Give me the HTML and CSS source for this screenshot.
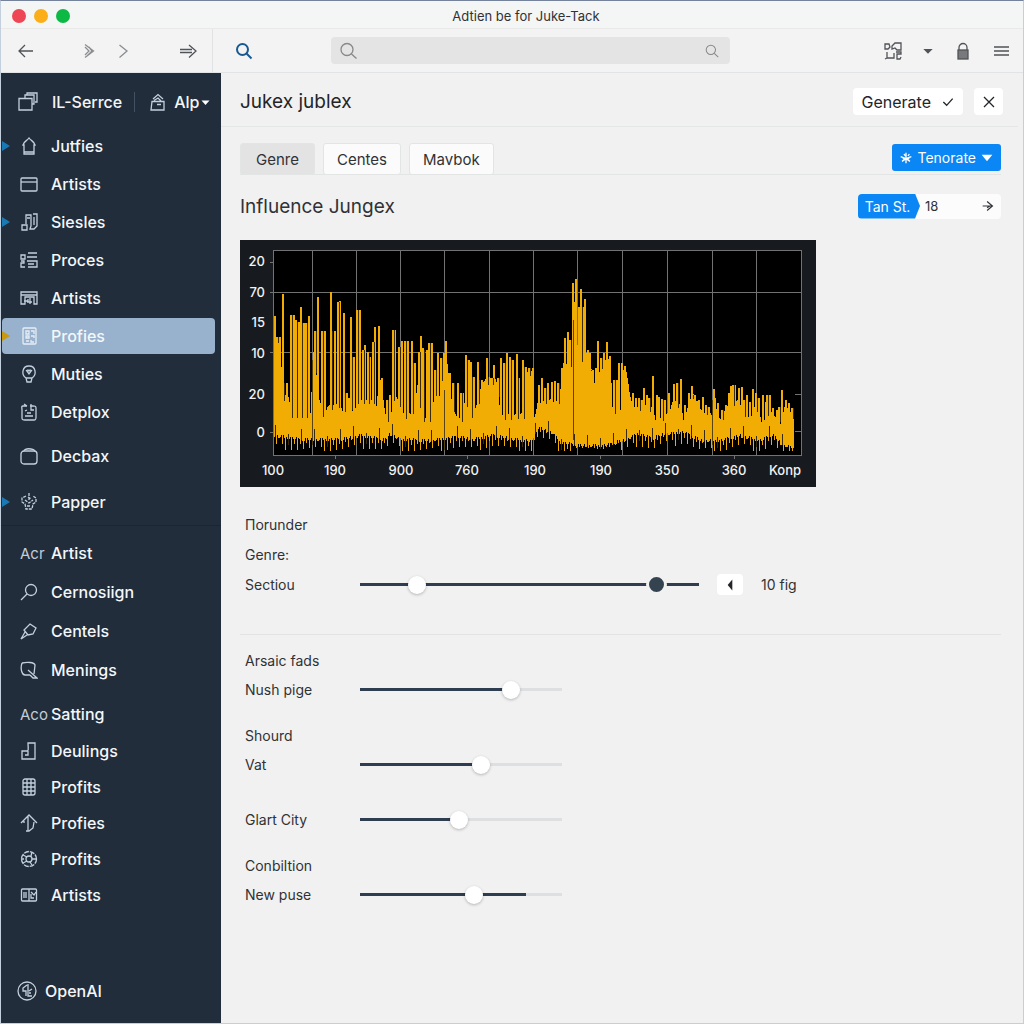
FILE: index.html
```html
<!DOCTYPE html>
<html lang="en">
<head>
<meta charset="utf-8">
<meta name="viewport" content="width=device-width, initial-scale=1">
<title>Adtien be for Juke-Tack</title>
<link rel="stylesheet" href="styles.css">
</head>
<body>
<div class="window">
  <header class="titlebar">
    <div class="lights"><span class="light red"></span><span class="light amber"></span><span class="light green"></span></div>
    <div class="window-title">Adtien be for Juke-Tack</div>
  </header>

  <div class="toolbar">
    <div class="history">
      <button class="icon-btn back" aria-label="Back"><svg class="icon" viewBox="0 0 18 18"><path d="M16 9H2.500M8 3 2 9l6 6"/></svg></button>
      <button class="icon-btn skip" aria-label="Skip"><svg class="icon" viewBox="0 0 18 18"><path d="M5 2.500 13.500 9 5 15.500M5 5l4 4-4 4M9 5l3 4-5 5"/></svg></button>
      <button class="icon-btn next" aria-label="Next"><svg class="icon" viewBox="0 0 18 18"><path d="M5.500 3 13 9l-7.500 6.500"/></svg></button>
      <button class="icon-btn jump" aria-label="Forward"><svg class="icon" viewBox="0 0 18 18"><path d="M1 7.500h12M1 10.500h12M10 3l7 6-7 6.500"/></svg></button>
    </div>
    <button class="icon-btn find" aria-label="Find"><svg class="icon" viewBox="0 0 18 18"><circle cx="7.500" cy="7.500" r="5.500"/><path d="m11.500 11.500 5 5"/></svg></button>
    <label class="search">
      <svg class="icon" viewBox="0 0 18 18"><circle cx="8" cy="7.500" r="6"/><path d="m12.500 12 5 4.500"/></svg>
      <input type="search" aria-label="Search">
      <svg class="icon small" viewBox="0 0 18 18"><circle cx="7.500" cy="7.500" r="6"/><path d="m12 12 5 5"/></svg>
    </label>
    <div class="tools">
      <button class="icon-btn" aria-label="Layout"><svg class="icon" viewBox="0 0 18 18"><path d="M1 2h4l1 3-2 2H1zM8 4l3-3h6v7h-4l-2-2-3 1zM3 10v6h7v-5M3 16l-2 1M12 10h5v2h-4v5h3l1-2"/></svg></button>
      <button class="icon-btn caret" aria-label="More"><svg class="icon solid" viewBox="0 0 18 18"><path d="M2 6h14l-7 7z"/></svg></button>
      <button class="icon-btn" aria-label="Lock"><svg class="icon lock" viewBox="0 0 18 18"><path d="M5 9V5.500a4 4 0 0 1 8 0V9"/><rect x="4" y="8" width="10" height="9"/></svg></button>
      <button class="icon-btn" aria-label="Menu"><svg class="icon" viewBox="0 0 18 18"><path d="M2 5h15M2 9h15M2 13h15"/></svg></button>
    </div>
  </div>

  <div class="body">
    <aside class="sidebar">
      <div class="switcher">
        <a class="switch" href="#"><svg class="icon large" viewBox="0 0 20 20"><path d="M1 6.500h13V18H1zM7 6V3h9v9h-2M9 3V1h10v9h-2"/></svg>IL-Serrce</a>
        <button class="switch account"><svg class="icon" viewBox="0 0 18 18"><path d="M3 8.500h12V17H2zM4 6l5-4.500 5 4.500M5 7.500 9 5l3 3M8 11.500h4"/></svg>Alp<svg class="icon tiny solid" viewBox="0 0 18 18"><path d="M1 5h16l-8 9z"/></svg></button>
      </div>
      <nav>
        <ul class="list">
          <li class="marked"><a href="#"><svg class="icon" viewBox="0 0 18 18"><path d="M3 8c1-4 4-4 6-7 2 3 5 3 6 7h-1v9H4V8zM4 15h10"/></svg>Jutfies</a></li>
          <li><a href="#"><svg class="icon" viewBox="0 0 18 18"><rect x="1" y="3" width="16" height="13" rx="1"/><path d="M1 7h16"/></svg>Artists</a></li>
          <li class="marked"><a href="#"><svg class="icon" viewBox="0 0 18 18"><path d="M6 11V2h5v11l-1 3h4l3-3V1h-4M2 12h5v5H2zM7 5h3M14 4v8"/></svg>Siesles</a></li>
          <li><a href="#"><svg class="icon" viewBox="0 0 18 18"><path d="M8 2h9M7 6h10M7 10h10v6H8M8 13h6M1 4h4v4H1zM1 10h3v2H1v4h4"/></svg>Proces</a></li>
          <li><a href="#"><svg class="icon" viewBox="0 0 18 18"><path d="M1 3h16v12h-3V8H5v7H1zM1 6h16M4 12h4v-2M10 15V9M7 13h5"/></svg>Artists</a></li>
          <li class="active"><a href="#" aria-current="page"><svg class="icon" viewBox="0 0 18 18"><rect x="3" y="1" width="13" height="16" rx="1"/><path d="M6 4h3v3H6zM11 4h3v3M6 9h3v2H6zM11 9h3v2M6 14h3M11 13v2h3"/></svg>Profies</a></li>
          <li><a href="#"><svg class="icon" viewBox="0 0 18 18"><path d="M6 13C1 10 2 1 9 1s8 9 3 12l-1 4H7zM6 13h6"/><path d="M6.500 5.500 8 5l1 1 1-1 1.500.5L9 9z"/></svg>Muties</a></li>
          <li><a href="#"><svg class="icon" viewBox="0 0 18 18"><path d="M7 3H3C1 3 2 5 2 7v8c0 2 1 2 3 2h9c2 0 2-1 2-3V5c0-2-1-2-3-2h-3M4 1l3 2M11 1v6h3M5 8l2-1M7 10h4M5 13h8"/></svg>Detplox</a></li>
        </ul>
        <ul class="list roomy">
          <li><a href="#"><svg class="icon" viewBox="0 0 18 18"><rect x="1" y="4" width="16" height="13" rx="3"/><path d="M4 4c0-3 9-3 11 0"/></svg>Decbax</a></li>
          <li class="marked"><a href="#"><svg class="icon" viewBox="0 0 18 18"><path d="M6 3 2 5v4l3 2 1 5h6l1-5 3-2V5l-3-2M9 0v8M5 7l4 3 4-3M8 4l3 2M7 13h4" stroke-dasharray="3 1"/></svg>Papper</a></li>
        </ul>
        <h2 class="group first"><span>Acr</span>Artist</h2>
        <ul class="list medium">
          <li><a href="#"><svg class="icon" viewBox="0 0 18 18"><circle cx="11" cy="7" r="5.500"/><path d="m7 11-6 6"/></svg>Cernosiign</a></li>
          <li><a href="#"><svg class="icon" viewBox="0 0 18 18"><path d="m10 2 6 4-3 6-5 1-4-5zM5 10l-4 7 6-4"/></svg>Centels</a></li>
          <li><a href="#"><svg class="icon" viewBox="0 0 18 18"><path d="M2 2c5-1 12-1 13 2l-1 9M2 2C0 8 2 14 5 14h5M8 9l9 8h-4l-3-3"/></svg>Menings</a></li>
        </ul>
        <h2 class="group"><span>Aco</span>Satting</h2>
        <ul class="list dense">
          <li><a href="#"><svg class="icon" viewBox="0 0 18 18"><path d="M8 1h7v16H2V9h5c2 0 1-4 1-8zM8 9v4H5"/></svg>Deulings</a></li>
          <li><a href="#"><svg class="icon" viewBox="0 0 18 18"><rect x="3" y="1" width="12" height="16" rx="2"/><path d="M3 5h12M3 9h12M3 13h12M7 1v16M11 1v16"/></svg>Profits</a></li>
          <li><a href="#"><svg class="icon" viewBox="0 0 18 18"><path d="m1 9 8-8 8 8M8 2v15M6 17h3l4-3 1-6M4 7v2"/></svg>Profies</a></li>
          <li><a href="#"><svg class="icon" viewBox="0 0 18 18"><circle cx="9" cy="9" r="7.500" stroke-dasharray="5 1"/><circle cx="9" cy="9" r="3"/><path d="m3 5 4 2M12 2l-1 4M16 9h-4M12 15l-2-3M3 13l4-2M1 9h3"/></svg>Profits</a></li>
          <li><a href="#"><svg class="icon" viewBox="0 0 18 18"><rect x="1.500" y="3" width="15" height="12" rx="1"/><path d="M9 3v12M4 6v6M6 6v6M11 6l3 3 2-3M11 8v4h3"/></svg>Artists</a></li>
        </ul>
      </nav>
      <a class="brand" href="#"><svg class="icon large" viewBox="0 0 20 20"><circle cx="10" cy="10" r="9"/><path d="M10 4 6 7v3h3v5M11 3v12h4M12 10l3-2M12 12h2"/></svg>OpenAI</a>
    </aside>

    <main class="main">
      <div class="page-head">
        <h1>Jukex jublex</h1>
        <button class="plain generate">Generate<svg class="icon tiny" viewBox="0 0 18 18"><path d="m2 9 5 5L16 4"/></svg></button>
        <button class="plain close" aria-label="Close"><svg class="icon" viewBox="0 0 18 18"><path d="m4 4 10 10M14 4 4 14"/></svg></button>
      </div>

      <div class="tabs">
        <button class="tab selected">Genre</button>
        <button class="tab">Centes</button>
        <button class="tab">Mavbok</button>
        <button class="primary"><svg class="icon tiny" viewBox="0 0 18 18"><path d="M9 1v16M1 7l8 3 8-3M3 14l6-4 6 4M6 3l2 3M14 3l-2 3M4 10h10"/></svg>Tenorate<svg class="icon tiny solid" viewBox="0 0 18 18"><path d="M1 4h16L9 14z"/></svg></button>
      </div>

      <div class="section-head">
        <h2>Influence Jungex</h2>
        <div class="stepper">
          <button class="tag">Tan St.</button>
          <input type="text" value="18" aria-label="Tan St.">
          <button class="go" aria-label="Go"><svg class="icon" viewBox="0 0 18 18"><path d="M3 9h11M8 4l6 5-6 5M11 9l-3 2"/></svg></button>
        </div>
      </div>

      <svg class="chart" viewBox="0 0 576 247" role="img" aria-label="Influence Jungex waveform">
        <rect class="chart-frame" width="576" height="247"/>
        <rect class="chart-plot" x="34" y="10" width="528" height="205"/>
        <path class="grid" d="M72.500 10v205M116.500 10v205M160.500 10v205M204.500 10v205M249.500 10v205M293.500 10v205M337.500 10v205M382.500 10v205M427.500 10v205M472.500 10v205M516.500 10v205M30 52.500h532M30 112.500h532M30 22.500h4M30 192.500h4M555 154.500h7M555 191.500h7M95.500 215v4M227.500 215v4M360.500 215v4M494.500 215v4"/>
        <path class="wave" id="wave"/>
        <path class="gaps" id="gaps"/>
        <path class="grid over" d="M72.500 120v85M204.500 150v60M333.500 80v120M472.500 160v45"/>
        <rect class="grid" x="33.500" y="10.500" width="528" height="205"/>
        <g class="y-axis">
          <text x="25" y="26">20</text><text x="25" y="57">70</text><text x="25" y="87">15</text><text x="25" y="118">10</text><text x="25" y="159">20</text><text x="25" y="197">0</text>
        </g>
        <g class="x-axis">
          <text x="33" y="235">100</text><text x="95" y="235">190</text><text x="161" y="235">900</text><text x="227" y="235">760</text><text x="295" y="235">190</text><text x="361" y="235">190</text><text x="427" y="235">350</text><text x="494" y="235">360</text><text x="545" y="235">Konp</text>
        </g>
      </svg>

      <form class="settings">
        <section class="block top">
          <h3>Пorunder</h3>
          <h3>Genre:</h3>
          <div class="row">
            <label for="section">Sectiou</label>
            <div class="range-pair">
              <input id="section" class="slider full" type="range" value="15">
              <input class="slider upper" type="range" value="90" aria-label="Sectiou upper">
            </div>
            <button type="button" class="plain nudge" aria-label="Previous"><svg class="icon solid" viewBox="0 0 18 18"><path d="M12 2v14L6 9z"/></svg></button>
            <output for="section">10 fig</output>
          </div>
        </section>
        <section class="block">
          <h3>Arsaic fads</h3>
          <div class="row"><label for="nush">Nush pige</label><input id="nush" class="slider" type="range" value="77" style="--fill:75%"></div>
        </section>
        <section class="block apart">
          <h3>Shourd</h3>
          <div class="row"><label for="vat">Vat</label><input id="vat" class="slider" type="range" value="61" style="--fill:60%"></div>
        </section>
        <section class="block">
          <div class="row"><label for="city">Glart City</label><input id="city" class="slider" type="range" value="49" style="--fill:49%"></div>
        </section>
        <section class="block">
          <h3>Conbiltion</h3>
          <div class="row"><label for="puse">New puse</label><input id="puse" class="slider" type="range" value="57" style="--fill:82%"></div>
        </section>
      </form>
    </main>
  </div>
</div>
<script src="wave.js"></script>
</body>
</html>
```
FILE: styles.css
```css
* { box-sizing: border-box; }

body {
  margin: 0;
  font-family: Inter, "Liberation Sans", sans-serif;
  font-size: 14px;
  color: #303236;
  background: #f1f1f1;
}

h1, h2, h3, ul { margin: 0; padding: 0; }
h1, h2, h3 { font-weight: 400; }
ul { list-style: none; }
a { color: inherit; text-decoration: none; }
button, input { font: inherit; color: inherit; border: 0; margin: 0; padding: 0; background: none; }

.window {
  display: flex;
  flex-direction: column;
  min-height: 100vh;
  border: 1px solid #c3cfdd;
  border-top-color: #74839b;
}

.icon {
  width: 18px;
  height: 18px;
  flex: none;
  display: block;
  fill: none;
  stroke: currentColor;
  stroke-width: 1.3;
}
.icon.large { width: 20px; height: 20px; }
.icon.small { width: 14px; height: 14px; }
.icon.tiny { width: 12px; height: 12px; stroke-width: 2; }
.icon.solid { fill: currentColor; stroke: none; }

/* Title bar */
.titlebar {
  display: grid;
  grid-template-columns: 84px 1fr 56px;
  align-items: center;
  height: 28px;
  padding-top: 2px;
  border-bottom: 1px solid #e9e9ea;
  background: #f4f5f5;
}
.lights { display: flex; gap: 8px; padding-left: 11px; }
.light { width: 14px; height: 14px; border-radius: 50%; }
.red { background: #ee4655; }
.amber { background: #fbae17; }
.green { background: #0cb944; }
.window-title { text-align: center; font-size: 13px; }

/* Toolbar */
.toolbar {
  display: flex;
  align-items: center;
  height: 44px;
  border-bottom: 1px solid #e2e3e4;
  background: #f3f3f3;
}
.history {
  display: flex;
  align-items: center;
  align-self: stretch;
  width: 212px;
  padding-left: 16px;
  border-right: 1px solid #e2e3e4;
}
.icon-btn { color: #505357; }
.back { margin-right: 45px; }
.skip { margin-right: 16px; color: #8b8d90; }
.next { margin-right: 47px; color: #8b8d90; }
.find { margin-left: 22px; color: #175a93; }
.find .icon { stroke-width: 2; }
.search {
  display: flex;
  align-items: center;
  flex: 1;
  height: 27px;
  margin: 0 154px 0 78px;
  padding: 0 11px 0 8px;
  border-radius: 4px;
  background: #e4e4e4;
  color: #86888a;
}
.search input { flex: 1; min-width: 0; outline: 0; appearance: none; }
.tools { display: flex; align-items: center; gap: 20px; padding-right: 13px; }
.caret .icon { width: 12px; height: 12px; }
.lock rect { fill: #77797c; }

/* Sidebar */
.body { display: flex; flex: 1; }
.sidebar {
  display: flex;
  flex-direction: column;
  flex: none;
  width: 220px;
  padding-bottom: 20px;
  background: #212d3a;
  color: #f4f7fa;
  font-size: 16px;
  font-weight: 500;
}
.switcher { display: flex; align-items: center; height: 54px; padding: 4px 0 0 17px; }
.switch { display: flex; align-items: center; gap: 14px; height: 20px; }
.switch .icon, .list .icon, .brand .icon { color: #c3d0dd; }
.account { gap: 7px; margin-left: 12px; padding-left: 14px; border-left: 1px solid #435160; font-weight: 500; }
.account .tiny { width: 9px; height: 9px; margin-left: -5px; color: #fff; }

.list li { position: relative; padding: 1px 6px 1px 1px; }
.list a { display: flex; align-items: center; gap: 13px; height: 36px; padding-left: 18px; border-radius: 4px; }
.roomy { padding-top: 2px; border-bottom: 1px solid #1b2632; }
.roomy a { height: 44px; }
.medium a { height: 37px; }
.dense a { height: 34px; }
.active a { background: #98b1cc; }
.active .icon { color: #e6eef6; }
.marked::before, .active::before {
  content: "";
  position: absolute;
  left: 1px;
  top: 50%;
  margin-top: -5px;
  border: 5px solid transparent;
  border-left: 8px solid #1979b4;
  border-right: 0;
}
.active::before { border-left-color: #c79a10; }
.group { display: flex; align-items: center; height: 38px; margin-top: 6px; padding-left: 19px; font-size: 16px; font-weight: 500; }
.group.first { margin-top: 8px; }
.group span { width: 31px; font-weight: 400; color: #c3ccd6; font-size: 15px; }
.brand { display: flex; align-items: center; gap: 8px; height: 24px; margin-top: auto; padding-left: 16px; }

/* Main column */
.main { flex: 1; min-width: 0; padding: 0 22px 24px 19px; }
.page-head {
  display: flex;
  align-items: center;
  height: 54px;
  margin: 0 -17px 0 -19px;
  padding: 4px 15px 0 19px;
  border-bottom: 1px solid #e5e6e6;
}
h1 { flex: 1; font-size: 19px; color: #232529; }
.plain { display: flex; align-items: center; justify-content: center; height: 27px; border-radius: 4px; background: #fff; color: #232529; }
.generate { gap: 11px; padding: 0 9px; font-size: 16px; }
.close { width: 29px; margin-left: 11px; }

.tabs { display: flex; align-items: flex-end; gap: 8px; height: 48px; border-bottom: 1px solid #e3e4e4; }
.tab {
  height: 32px;
  margin-bottom: -1px;
  padding: 0 13px;
  border: 1px solid #e3e4e4;
  border-radius: 3px;
  background: #fbfbfb;
  font-size: 15px;
}
.tab.selected { padding: 0 15px; background: #e3e3e3; }
.primary {
  display: flex;
  align-items: center;
  gap: 5px;
  height: 27px;
  margin: 0 0 3px auto;
  padding: 0 8px;
  border-radius: 3px;
  background: #0a86f5;
  color: #fff;
}

.section-head { display: flex; align-items: center; justify-content: space-between; height: 65px; padding-bottom: 3px; }
.section-head h2 { font-size: 19px; }
.stepper { display: flex; width: 143px; height: 25px; border-radius: 4px; background: #fcfcfc; }
.tag {
  width: 62px;
  padding-right: 3px;
  border-radius: 4px 0 0 4px;
  background: #0a86f5;
  color: #fff;
  clip-path: polygon(0 0, 92% 0, 100% 50%, 92% 100%, 0 100%);
}
.stepper input { flex: 1; min-width: 0; padding-left: 5px; font-size: 13px; }
.go { padding: 0 5px; }
.go .icon { width: 16px; height: 16px; }

/* Chart */
.chart { display: block; width: 100%; max-width: 576px; height: auto; }
.chart-frame { fill: #171b20; }
.chart-plot { fill: #000; }
.grid { fill: none; stroke: #727272; }
.over { stroke: #59430c; }
.wave { fill: #f2ad05; }
.gaps { fill: #3a2a06; }
.chart text { fill: #f2f2f2; font-size: 13px; font-weight: 500; }
.y-axis { text-anchor: end; }
.x-axis { text-anchor: middle; }

/* Settings */
.settings { display: flex; flex-direction: column; }
.block { display: flex; flex-direction: column; gap: 8px; padding: 0 0 25px 5px; }
.block.apart { padding-bottom: 34px; }
.block.top { padding: 27px 0 39px 5px; border-bottom: 1px solid #e2e3e3; margin-bottom: 15px; gap: 9px; }
h3, .row { height: 21px; line-height: 21px; font-size: 14px; }
.row { display: flex; align-items: center; }
.row label { width: 115px; }
.row output { margin-left: 18px; }

.slider {
  --fill: 100%;
  width: 202px;
  height: 21px;
  appearance: none;
  background: linear-gradient(to right, #2e3d50 var(--fill), #dedfe0 var(--fill)) center / 100% 3px no-repeat;
}
.slider::-webkit-slider-thumb {
  appearance: none;
  width: 18px;
  height: 18px;
  border-radius: 50%;
  background: #fff;
  box-shadow: 0 1px 3px rgba(0, 0, 0, .25);
}
.range-pair { display: grid; width: 339px; }
.range-pair .slider { grid-area: 1 / 1; width: 100%; pointer-events: none; }
.range-pair .slider::-webkit-slider-thumb { pointer-events: auto; }
.range-pair .upper { background: none; }
.range-pair .upper::-webkit-slider-thumb {
  width: 21px;
  height: 21px;
  border: 3px solid #f1f1f1;
  background: #34434f;
  box-shadow: none;
}
.nudge { width: 26px; height: 21px; margin-left: 18px; }
.nudge .icon { width: 14px; height: 14px; }
```
FILE: wave.js
```js
// Peaks and body outline of the waveform, as x, y pairs in chart units.
const peaks = [
  35,76, 37,97, 40,97, 43,54, 47,143, 51,75, 54,75, 56,80, 59,82, 61,67, 64,83, 66,83, 69,76,
  75,91, 78,57, 82,91, 85,91, 91,52, 95,91, 98,62, 100,61, 104,73, 107,153, 111,77, 114,117,
  117,70, 120,70, 123,110, 125,105, 128,112, 130,117, 133,102, 135,87, 139,86, 142,138,
  147,160, 150,155, 153,90, 155,90, 159,107, 162,101, 165,101, 168,101, 172,101, 175,123,
  179,112, 181,96, 183,108, 187,110, 189,103, 192,103, 195,130, 198,113, 201,118, 204,113,
  206,101, 210,133, 213,143, 218,143, 221,153, 223,153, 226,115, 229,120, 231,122, 234,137,
  238,122, 242,140, 247,118, 249,137, 252,138, 254,125, 258,138, 261,118, 264,123, 267,113,
  270,117, 273,120, 277,114, 279,138, 283,120, 286,127, 289,128, 293,128, 299,145, 302,138,
  305,148, 308,143, 312,142, 315,141, 318,143, 322,128, 325,98, 328,92, 330,100, 333,43,
  336,39, 339,67, 341,49, 343,67, 345,59, 348,110, 350,113, 353,130, 356,128, 358,101,
  361,118, 364,113, 367,102, 370,116, 374,140, 377,140, 379,123, 382,123, 385,126, 388,148,
  393,153, 396,158, 399,158, 402,160, 404,148, 407,155, 409,158, 413,136, 417,155, 419,157,
  422,159, 425,160, 429,153, 434,144, 437,143, 441,139, 445,165, 449,153, 452,146, 455,155,
  459,160, 463,157, 466,165, 469,167, 474,149, 478,163, 482,170, 486,165, 489,153, 491,146,
  493,145, 495,145, 499,148, 502,147, 504,160, 507,155, 510,162, 513,149, 516,153, 519,158,
  523,155, 526,162, 527,155, 530,155, 533,168, 537,170, 539,167, 542,150, 546,160, 549,163,
  552,168, 553,168
];
const body = [
  34,97, 40,97, 42,155, 48,155, 51,172, 70,172, 73,112, 79,158, 84,180, 87,165, 100,162,
  103,176, 105,155, 110,157, 113,178, 117,158, 134,158, 136,166, 139,132, 142,153, 145,173,
  150,180, 153,155, 158,158, 163,172, 168,175, 174,165, 177,145, 181,178, 192,178, 194,145,
  198,163, 202,125, 207,122, 210,155, 217,180, 221,176, 225,158, 230,173, 237,163, 242,140,
  250,138, 257,140, 260,174, 284,173, 286,175, 287,130, 292,130, 294,177, 297,163, 305,158,
  313,160, 319,157, 323,123, 332,120, 334,60, 338,117, 347,113, 352,133, 355,148, 358,137,
  362,118, 370,117, 372,167, 380,170, 383,130, 386,130, 390,157, 395,167, 403,163, 411,167,
  415,178, 427,173, 433,160, 440,163, 443,178, 447,167, 452,153, 457,160, 462,173, 468,167,
  472,177, 475,157, 477,180, 483,173, 490,160, 497,160, 503,170, 510,177, 515,163, 522,183,
  527,170, 533,173, 540,183, 545,163, 552,173, 554,168
];
const floor = [
  34,194, 60,198, 78,198, 100,198, 120,194, 145,198, 150,192, 160,198, 190,199, 205,197,
  218,195, 232,198, 252,194, 275,198, 292,200, 297,186, 312,191, 320,201, 340,204, 365,204,
  385,198, 398,192, 412,197, 425,192, 445,191, 460,199, 480,199, 500,194, 520,199, 532,193,
  542,203, 554,207
];

const at = (line, x) => {
  for (let i = 2; i < line.length; i += 2) {
    if (x <= line[i]) {
      const t = (x - line[i - 2]) / (line[i] - line[i - 2] || 1);
      return line[i - 1] + t * (line[i + 1] - line[i - 1]);
    }
  }
  return line[line.length - 1];
};

let fill = "";
let gaps = "";
for (let x = 34; x < 554; x += 1) {
  const n = (x * 7919) % 13;
  const top = Math.round(at(body, x) + (n % 3));
  const reach = x > 330 && x < 380 ? 2 : 12;
  const dip = x % 3 ? n % 4 : 3 + (n / 13) * reach;
  const bottom = Math.min(211, Math.round(at(floor, x) + dip));
  fill += `M${x} ${top}h1V${bottom}h-1z`;
  if (n === 5) gaps += `M${x} ${bottom - 10}h1v11h-1z`;
}
for (let i = 0; i < peaks.length; i += 2) {
  const [x, y, nextX, nextY] = peaks.slice(i, i + 4);
  fill += `M${x - 1} ${y}h2V185h-2z`;
  // A dark hairline parts each peak from its neighbour.
  if (nextX && (x < 294 ? i % 4 : i % 8 === 2)) {
    const start = Math.max(y, nextY);
    const end = Math.min(182, Math.round(at(body, x)) + 6);
    if (end > start) gaps += `M${x + 1} ${start}h1V${end}h-1z`;
  }
}
document.getElementById("wave").setAttribute("d", fill);
document.getElementById("gaps").setAttribute("d", gaps);
```
